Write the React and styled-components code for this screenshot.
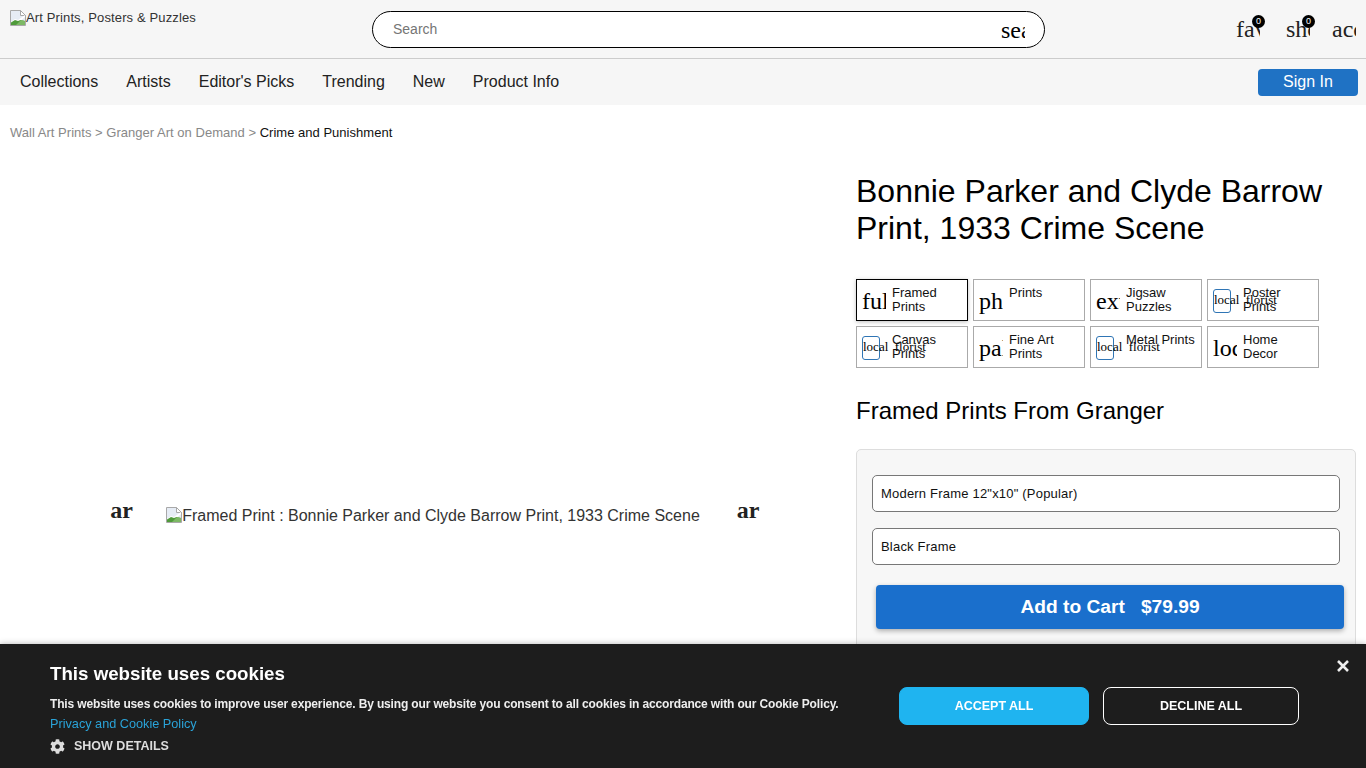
import React from "react";
import styled, { createGlobalStyle } from "styled-components";
import { FaCog } from "react-icons/fa";

const GlobalStyle = createGlobalStyle`
  html, body, #root {
    margin: 0;
    padding: 0;
    height: 100%;
    overflow: hidden;
    background: #fff;
    font-family: "Liberation Sans", Arial, sans-serif;
    color: #000;
  }
  * { box-sizing: border-box; }
`;

const TopBar = styled.header`
  display: grid;
  grid-template-columns: 362px 673px 1fr;
  height: 59px;
  padding: 0 10px;
  background: #f6f6f6;
  border-bottom: 1px solid #ccc;
`;

const Logo = styled.a`
  display: flex;
  align-items: flex-start;
  padding-top: 10px;
  font-size: 13px;
  line-height: 15px;
  letter-spacing: 0.13px;
  color: #333;
`;

const BrokenImg = styled.svg`
  width: 16px;
  height: 16px;
  flex: none;
`;

const SearchBox = styled.div`
  display: flex;
  align-items: center;
  justify-content: space-between;
  align-self: start;
  margin-top: 11px;
  height: 37px;
  padding: 0 19px 0 20px;
  background: #fff;
  border: 1px solid #000;
  border-radius: 19px;
`;

const Placeholder = styled.span`
  margin-top: -1px;
  font-size: 14px;
  color: #757575;
`;

const Ligature = styled.span`
  display: block;
  width: 24px;
  overflow: hidden;
  white-space: nowrap;
  font-family: "Liberation Serif", "Times New Roman", serif;
  font-size: 24px;
  line-height: 28px;
  color: ${(p) => p.$color || "#000"};
`;

const TopIcons = styled.div`
  display: flex;
  justify-content: flex-end;
  align-items: center;
  height: 58px;
`;

const IconSlot = styled.div`
  position: relative;
  margin-left: ${(p) => p.$gap || 0}px;
`;

const CountBadge = styled.span`
  position: absolute;
  top: 0;
  right: -5px;
  width: 13px;
  height: 13px;
  border-radius: 50%;
  background: #000;
  color: #fff;
  font-size: 9px;
  line-height: 13px;
  text-align: center;
`;

const NavBar = styled.nav`
  display: flex;
  align-items: center;
  justify-content: space-between;
  height: 46px;
  padding: 0 8px 0 20px;
  background: #f6f6f6;
`;

const NavLinks = styled.div`
  display: flex;
  gap: 28px;
`;

const NavLink = styled.a`
  font-size: 16px;
  color: #222;
`;

const SignIn = styled.button`
  width: 100px;
  height: 27px;
  padding: 0;
  border: 0;
  border-radius: 4px;
  background: #1f72c4;
  color: #fff;
  font-family: inherit;
  font-size: 16px;
`;

const Crumbs = styled.div`
  padding: 20px 10px 0;
  font-size: 13px;
  line-height: 16px;
  letter-spacing: 0.02px;
  color: #888;
`;

const CrumbCurrent = styled.span`
  color: #111;
`;

const Main = styled.main`
  display: grid;
  grid-template-columns: 846px 500px;
  column-gap: 10px;
  padding-top: 29px;
`;

const Gallery = styled.section`
  display: flex;
  align-items: center;
  justify-content: center;
  height: 692px;
  padding-left: 25px;
`;

const Arrow = styled.span`
  display: block;
  width: 24px;
  margin-top: -12px;
  margin-left: ${(p) => p.$before || 0}px;
  margin-right: ${(p) => p.$after || 0}px;
  font-family: "Liberation Serif", "Times New Roman", serif;
  font-size: 24px;
  font-weight: 700;
  line-height: 28px;
  color: #222;
`;

const MainImage = styled.div`
  display: flex;
  align-items: flex-start;
  font-size: 16px;
  line-height: 18px;
  color: #333;
`;

const Details = styled.section`
  display: flex;
  flex-direction: column;
`;

const Title = styled.h1`
  margin: 0 0 32px;
  padding-top: 3px;
  font-size: 32px;
  font-weight: 400;
  line-height: 37px;
`;

const Tabs = styled.div`
  display: grid;
  grid-template-columns: repeat(4, 112px);
  grid-auto-rows: 42px;
  gap: 5px;
`;

const Tab = styled.a`
  display: flex;
  align-items: center;
  gap: 5px;
  padding: 0 5px;
  background: #fff;
  border: 1px solid ${(p) => (p.$active ? "#000" : "#aaa")};
  box-shadow: ${(p) => (p.$active ? "0 1px 4px rgba(0,0,0,.25)" : "none")};
`;

const TabIcon = styled.span`
  display: block;
  flex: none;
  width: 24px;
  margin-right: 1px;
  margin-top: 1px;
  overflow: hidden;
  white-space: nowrap;
  font-family: "Liberation Serif", "Times New Roman", serif;
  font-size: 24px;
  line-height: 28px;
`;

const FlowerIcon = styled.span`
  display: block;
  flex: none;
  width: 18px;
  height: 24px;
  margin: 1px 7px 0 0;
  border: 1px solid #2f75b5;
  border-radius: 3px;
  white-space: nowrap;
  font-family: "Liberation Serif", "Times New Roman", serif;
  font-size: 13px;
  line-height: 20px;
`;

const TabText = styled.span`
  align-self: ${(p) => (p.$top ? "flex-start" : "center")};
  margin-top: ${(p) => (p.$top ? "6px" : "0")};
  max-width: 71px;
  font-size: 13px;
  line-height: 14px;
  color: #111;
`;

const SubTitle = styled.h2`
  margin: 29px 0 24px;
  font-size: 24px;
  font-weight: 400;
  line-height: 28px;
`;

const BuyPanel = styled.div`
  display: flex;
  flex-direction: column;
  padding: 25px 15px 30px;
  background: #f7f7f7;
  border: 1px solid #ddd;
  border-radius: 5px;
`;

const Picker = styled.select`
  appearance: none;
  width: 468px;
  height: 37px;
  margin-bottom: 16px;
  padding: 0 8px;
  background: #fff;
  border: 1px solid #777;
  border-radius: 5px;
  font-family: inherit;
  font-size: 13px;
  letter-spacing: 0.2px;
  color: #111;
`;

const AddToCart = styled.button`
  display: flex;
  align-items: center;
  justify-content: center;
  gap: 16px;
  width: 468px;
  height: 44px;
  margin: 4px 0 0 4px;
  border: 0;
  border-radius: 4px;
  background: #1a6fcc;
  box-shadow: 0 2px 5px rgba(0, 0, 0, 0.3);
  color: #fff;
  font-family: inherit;
  font-size: 19.2px;
  font-weight: 700;
`;

const CookieBar = styled.aside`
  position: fixed;
  left: 0;
  right: 0;
  bottom: 0;
  display: flex;
  justify-content: space-between;
  height: 124px;
  padding: 18px 67px 0 50px;
  background: #1d1d1d;
  box-shadow: 0 0 6px rgba(0, 0, 0, 0.3);
  color: #fff;
`;

const CookieText = styled.div`
  display: flex;
  flex-direction: column;
`;

const CookieTitle = styled.h3`
  margin: 0 0 9px;
  font-size: 18.72px;
  font-weight: 700;
  line-height: 24px;
`;

const CookieBody = styled.p`
  margin: 0;
  font-size: 12px;
  font-weight: 700;
  line-height: 19px;
  letter-spacing: -0.15px;
  color: #eee;
`;

const PolicyLink = styled.a`
  font-size: 12.7px;
  line-height: 20px;
  color: #2aa3d8;
`;

const ShowDetails = styled.div`
  display: flex;
  align-items: center;
  gap: 9px;
  margin-top: 2px;
  font-size: 12.5px;
  font-weight: 700;
  line-height: 20px;
  color: #ddd;
`;

const CookieActions = styled.div`
  display: flex;
  gap: 14px;
  margin-top: 25px;
  align-self: flex-start;
`;

const CookieButton = styled.button`
  width: ${(p) => p.$w}px;
  height: 38px;
  padding: 0;
  border: 1px solid ${(p) => (p.$primary ? "#1fb4f0" : "#fff")};
  border-radius: 8px;
  background: ${(p) => (p.$primary ? "#1fb4f0" : "transparent")};
  color: #fff;
  font-family: inherit;
  font-size: 12.5px;
  font-weight: 700;
`;

const CloseIcon = styled.svg`
  position: absolute;
  top: 15px;
  right: 16px;
  width: 14px;
  height: 14px;
`;

const tabs = [
  { icon: "full", text: "Framed Prints", active: true },
  { icon: "photo", text: "Prints", top: true },
  { icon: "extension", text: "Jigsaw Puzzles" },
  { flower: true, text: "Poster Prints" },
  { flower: true, text: "Canvas Prints" },
  { icon: "palette", text: "Fine Art Prints" },
  { flower: true, text: "Metal Prints", top: true },
  { icon: "local", text: "Home Decor" },
];

// Chrome's broken image placeholder
function BrokenImage() {
  return (
    <BrokenImg viewBox="0 0 16 16">
      <path d="M0.5 0.5h10l5 5v10h-15z" fill="#e6ecf5" stroke="#a8a8a8" />
      <path d="M10.5 0.5v5h5z" fill="#fff" stroke="#a8a8a8" />
      <path d="M1 15v-3l4-3 3 1 7-5v2l-9 8z" fill="#fff" />
      <path d="M1 15v-2.5l4-2.5 3 1 2.5-1 4.5 1v4z" fill="#4f9a3a" />
      <path d="M6 15l5-5 4 1v4z" fill="#7db865" />
    </BrokenImg>
  );
}

export default function App() {
  return (
    <>
      <GlobalStyle />
      <TopBar>
        <Logo>
          <BrokenImage />
          Art Prints, Posters &amp; Puzzles
        </Logo>
        <SearchBox>
          <Placeholder>Search</Placeholder>
          <Ligature>search</Ligature>
        </SearchBox>
        <TopIcons>
          <IconSlot>
            <Ligature $color="#222">favorite</Ligature>
            <CountBadge>0</CountBadge>
          </IconSlot>
          <IconSlot $gap={26}>
            <Ligature $color="#222">shopping</Ligature>
            <CountBadge>0</CountBadge>
          </IconSlot>
          <IconSlot $gap={22}>
            <Ligature $color="#222">account</Ligature>
          </IconSlot>
        </TopIcons>
      </TopBar>
      <NavBar>
        <NavLinks>
          <NavLink>Collections</NavLink>
          <NavLink>Artists</NavLink>
          <NavLink>Editor's Picks</NavLink>
          <NavLink>Trending</NavLink>
          <NavLink>New</NavLink>
          <NavLink>Product Info</NavLink>
        </NavLinks>
        <SignIn>Sign In</SignIn>
      </NavBar>
      <Crumbs>
        Wall Art Prints &gt; Granger Art on Demand &gt; <CrumbCurrent>Crime and Punishment</CrumbCurrent>
      </Crumbs>
      <Main>
        <Gallery>
          <Arrow $after={32}>ar</Arrow>
          <MainImage>
            <BrokenImage />
            Framed Print : Bonnie Parker and Clyde Barrow Print, 1933 Crime Scene
          </MainImage>
          <Arrow $before={37}>ar</Arrow>
        </Gallery>
        <Details>
          <Title>Bonnie Parker and Clyde Barrow Print, 1933 Crime Scene</Title>
          <Tabs>
            {tabs.map((t) => (
              <Tab key={t.text} $active={t.active}>
                {t.flower ? <FlowerIcon>local&nbsp;&nbsp;florist</FlowerIcon> : <TabIcon>{t.icon}</TabIcon>}
                <TabText $top={t.top}>{t.text}</TabText>
              </Tab>
            ))}
          </Tabs>
          <SubTitle>Framed Prints From Granger</SubTitle>
          <BuyPanel>
            <Picker defaultValue="modern">
              <option value="modern">Modern Frame 12"x10" (Popular)</option>
            </Picker>
            <Picker defaultValue="black">
              <option value="black">Black Frame</option>
            </Picker>
            <AddToCart>
              <span>Add to Cart</span>
              <span>$79.99</span>
            </AddToCart>
          </BuyPanel>
        </Details>
      </Main>
      <CookieBar>
        <CookieText>
          <CookieTitle>This website uses cookies</CookieTitle>
          <CookieBody>
            This website uses cookies to improve user experience. By using our website you consent to all cookies in accordance with our Cookie Policy.
          </CookieBody>
          <PolicyLink>Privacy and Cookie Policy</PolicyLink>
          <ShowDetails>
            <FaCog size={15} />
            SHOW DETAILS
          </ShowDetails>
        </CookieText>
        <CookieActions>
          <CookieButton $primary $w={190}>ACCEPT ALL</CookieButton>
          <CookieButton $w={196}>DECLINE ALL</CookieButton>
        </CookieActions>
        <CloseIcon viewBox="0 0 14 14">
          <path d="M2 2l10 10M12 2L2 12" stroke="#eee" strokeWidth="2.6" />
        </CloseIcon>
      </CookieBar>
    </>
  );
}
